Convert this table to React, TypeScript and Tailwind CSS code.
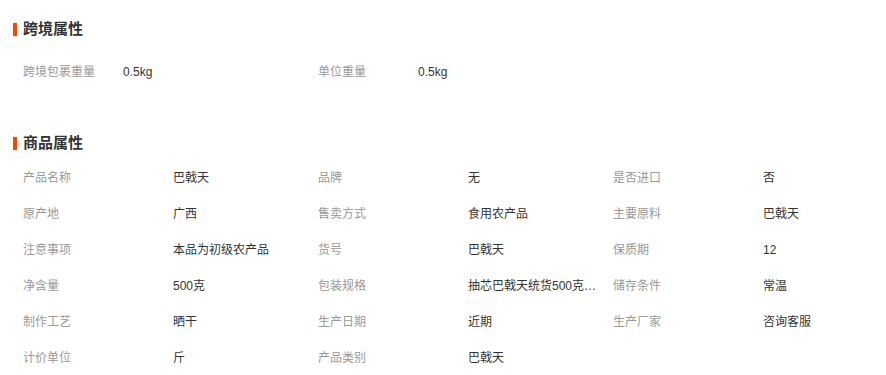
const crossBorder = [
  { label: '跨境包裹重量', value: '0.5kg' },
  { label: '单位重量', value: '0.5kg' },
];

const attrs = [
  { label: '产品名称', value: '巴戟天' },
  { label: '品牌', value: '无' },
  { label: '是否进口', value: '否' },
  { label: '原产地', value: '广西' },
  { label: '售卖方式', value: '食用农产品' },
  { label: '主要原料', value: '巴戟天' },
  { label: '注意事项', value: '本品为初级农产品' },
  { label: '货号', value: '巴戟天' },
  { label: '保质期', value: '12' },
  { label: '净含量', value: '500克' },
  { label: '包装规格', value: '抽芯巴戟天统货500克装/袋' },
  { label: '储存条件', value: '常温' },
  { label: '制作工艺', value: '晒干' },
  { label: '生产日期', value: '近期' },
  { label: '生产厂家', value: '咨询客服' },
  { label: '计价单位', value: '斤' },
  { label: '产品类别', value: '巴戟天' },
];

function Title({ text }: { text: string }) {
  return (
    <div className="flex items-center h-[20px]">
      <span className="w-[4px] h-[13px] bg-[#ff4400]" />
      <span className="ml-[6px] text-[15px] font-bold text-[#333]">{text}</span>
    </div>
  );
}

export default function App() {
  return (
    <div
      className="w-[886px] h-[375px] bg-white pl-[13px] overflow-hidden"
      style={{ fontFamily: '"Liberation Sans", "Noto Sans CJK SC", sans-serif' }}
    >
      <div className="pt-[19px]">
        <Title text="跨境属性" />
        <div className="grid grid-cols-[295px_295px] pl-[10px] mt-[15px]">
          {crossBorder.map((item) => (
            <div key={item.label} className="flex items-center h-[36px] text-[12px]">
              <span className="w-[100px] text-[#999]">{item.label}</span>
              <span className="text-[#333]">{item.value}</span>
            </div>
          ))}
        </div>
      </div>

      <div className="mt-[43px]">
        <Title text="商品属性" />
        <div className="grid grid-cols-[295px_295px_295px] pl-[10px] mt-[7px]">
          {attrs.map((item) => (
            <div key={item.label} className="flex items-center h-[36px] text-[12px]">
              <span className="w-[150px] shrink-0 text-[#999]">{item.label}</span>
              <span className="w-[130px] truncate text-[#333]">{item.value}</span>
            </div>
          ))}
        </div>
      </div>
    </div>
  );
}
